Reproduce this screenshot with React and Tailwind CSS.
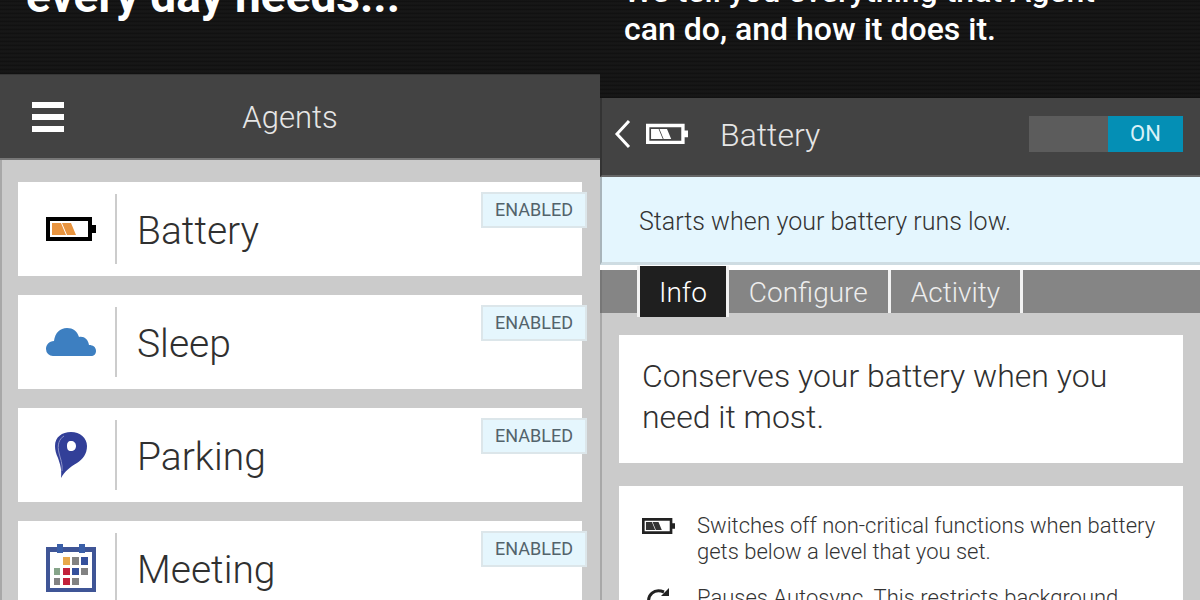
import { useState } from "react";

const agents = [
  { name: "Battery", icon: <BatteryIcon className="w-[50px] text-black" fill="#e8943f" /> },
  { name: "Sleep", icon: <CloudIcon /> },
  { name: "Parking", icon: <PinIcon /> },
  { name: "Meeting", icon: <CalendarIcon /> },
];

const tabs = ["Info", "Configure", "Activity"];

function BatteryIcon({ className, fill }) {
  return (
    <svg viewBox="0 0 50 26" className={className} aria-hidden="true">
      <path fill="currentColor" fillRule="evenodd" d="M0 1h46v8h4v8h-4v8H0zM4 5v16h38V5z" />
      <path fill={fill} d="M6 7h9l5 12H6zM16 7h9l5 12h-9z" />
    </svg>
  );
}

function CloudIcon() {
  return (
    <svg viewBox="0 0 50 28" className="w-[50px]" aria-hidden="true">
      <path
        fill="#3d7fc1"
        d="M7 28a7 7 0 0 1-7-7c0-4 3-8 8-8C9 5 14 0 21 0c6 0 10 3 12 9 5-1 9 2 10 8 4 0 7 2 7 6 0 3-2 5-5 5z"
      />
    </svg>
  );
}

function PinIcon() {
  return (
    <svg viewBox="0 0 34 48" className="w-[34px]" aria-hidden="true">
      <path
        fill="#323f98"
        fillRule="evenodd"
        d="M7 47C8 38 6 33 4 27 2 23 1 19 1 15 1 6 8 1 17 1s16 6 16 14c0 8-4 13-10 17-7 4-12 8-16 15zM17 10c-3 0-4 2-4 5s1 5 4 5 5-2 5-5-2-5-5-5z"
      />
      <path fill="none" stroke="#8d93c8" d="M8 40C9 33 6 27 5 22 3 14 5 8 10 5" />
    </svg>
  );
}

function CalendarIcon() {
  return (
    <svg viewBox="0 0 50 50" className="w-[50px]" aria-hidden="true">
      <path fill="#3f5596" fillRule="evenodd" d="M0 4h50v45H0zM4 9v36h42V9z" />
      <path fill="#3a5fa8" d="M11 1h6v9h-6zM33 1h6v9h-6z" />
      <path fill="#e8a84a" d="M17 14h7v8h-7z" />
      <path fill="#828282" d="M26 14h7v8h-7zM35 25h7v7h-7zM8 35h6v7H8zM26 35h7v7h-7z" />
      <path fill="#35509c" d="M35 14h7v8h-7zM26 25h7v7h-7z" />
      <path fill="#86a489" d="M8 25h6v7H8z" />
      <path fill="#c2223b" d="M17 25h7v7h-7zM17 35h7v7h-7z" />
    </svg>
  );
}

function SyncIcon() {
  return (
    <svg viewBox="0 0 28 28" className="w-7" aria-hidden="true">
      <g fill="none" stroke="#222" strokeWidth="3">
        <path d="M4 17C2 8 9 1 19 5M24 14c0 8-9 12-16 7" />
      </g>
      <path fill="#222" d="M24 1v8h-8zM4 27v-8h8z" />
    </svg>
  );
}

function AgentsPanel() {
  return (
    <section className="flex min-w-0 flex-col bg-[#cbcbcb]">
      <div className="flex h-[74px] shrink-0 flex-col justify-end overflow-hidden bg-[#151515] bg-[repeating-linear-gradient(0deg,#111_0px,#111_1px,#181818_2px,#151515_4px)] px-[26px] pb-[52px]">
        <h1 className="text-[46px] leading-[52px] font-bold text-white">every day needs...</h1>
      </div>
      <header className="flex h-[86px] shrink-0 items-center border-t border-b-2 border-t-[#363636] border-b-[#777] bg-[#434343] px-8">
        <button type="button" aria-label="Menu" className="flex w-8 flex-col gap-1.5">
          <span className="h-1.5 bg-white" />
          <span className="h-1.5 bg-white" />
          <span className="h-1.5 bg-white" />
        </button>
        <h2 className="flex-1 pt-0.5 pr-[52px] text-center text-[31px] leading-9 font-light text-[#e6e6e6]">Agents</h2>
      </header>
      <ul className="flex flex-col gap-[19px] border-l-2 border-[#a8a8a8] pt-[22px] pr-[18px] pl-4">
        {agents.map((agent) => (
          <li key={agent.name} className="relative flex h-[94px] shrink-0 items-center bg-white">
            <div className="flex h-[70px] w-[99px] shrink-0 items-center justify-center border-r-2 border-[#ccc] pl-2">
              {agent.icon}
            </div>
            <h3 className="pt-1 pl-5 text-[39px] leading-11 font-light text-[#303030]">{agent.name}</h3>
            <span className="absolute top-2.5 -right-[5px] border-2 border-[#dce6ea] bg-[#e5f6fd] px-3 text-[18px] leading-8 text-[#53636b]">
              ENABLED
            </span>
          </li>
        ))}
      </ul>
    </section>
  );
}

function BatteryPanel() {
  const [on, setOn] = useState(true);
  const [tab, setTab] = useState("Info");

  return (
    <section className="flex min-w-0 flex-col bg-[#cbcbcb]">
      <div className="flex h-[98px] shrink-0 flex-col justify-end overflow-hidden bg-[#151515] bg-[repeating-linear-gradient(0deg,#111_0px,#111_1px,#181818_2px,#151515_4px)] px-6 pb-[50px]">
        <p className="text-[32px] leading-[38px] font-medium whitespace-nowrap text-white">
          We tell you everything that Agent
          <br />
          can do, and how it does it.
        </p>
      </div>
      <header className="flex h-[79px] shrink-0 items-center border-b-2 border-l-2 border-b-[#666] border-l-[#333] bg-[#434343] pr-[17px] pb-1.5 pl-3">
        <button type="button" aria-label="Back" className="flex items-center">
          <svg viewBox="0 0 18 30" className="w-[18px]" aria-hidden="true">
            <path d="M15 2 3 15l12 13" fill="none" stroke="#fff" strokeWidth="3" />
          </svg>
        </button>
        <BatteryIcon className="ml-3.5 w-[42px] text-white" fill="#fff" />
        <h2 className="flex-1 pt-0.5 pl-8 text-[32px] leading-9 font-light text-[#e6e6e6]">Battery</h2>
        <button
          type="button"
          role="switch"
          aria-checked={on}
          aria-label="Battery agent"
          onClick={() => setOn(!on)}
          className={`flex h-9 w-[154px] bg-[#5c5c5c] ${on ? "justify-end" : "justify-start"}`}
        >
          <span className="w-[75px] bg-[#048fb5] text-center text-[22px] leading-9 text-[#d9f1f8]">
            {on ? "ON" : "OFF"}
          </span>
        </button>
      </header>
      <p className="flex h-[88px] shrink-0 items-center border-b-3 border-l-2 border-b-[#cedce2] border-l-[#a8b4ba] bg-[#e4f6fe] pt-1 pl-[37px] text-[25px] leading-8 font-light text-[#333]">
        Starts when your battery runs low.
      </p>
      <div className="h-[5px] shrink-0 bg-white" />
      <div role="tablist" className="flex h-[43px] shrink-0 border-l-2 border-[#777] bg-[#858585] pl-[35px]">
        {tabs.map((name) => (
          <button
            key={name}
            type="button"
            role="tab"
            aria-selected={tab === name}
            onClick={() => setTab(name)}
            className={
              tab === name
                ? "-my-1 border-x-3 border-[#f2f2f2] bg-[#1f1f1f] bg-clip-padding px-[19px] pt-0.5 text-[28px] leading-9 font-light text-white"
                : "border-r-3 border-[#f2f2f2] px-5 pt-0.5 text-[28px] leading-9 font-light text-[#ededed]"
            }
          >
            {name}
          </button>
        ))}
      </div>
      <div className="flex flex-col gap-[23px] border-l-2 border-[#a8a8a8] px-[17px] pt-[22px]">
        <div className="shrink-0 bg-white px-[23px] pt-[21px] pb-[25px]">
          <p className="max-w-[480px] text-[32px] leading-[41px] font-light text-[#303030]">
            Conserves your battery when you need it most.
          </p>
        </div>
        <ul className="flex shrink-0 flex-col gap-5 bg-white px-[23px] py-[27px]">
          <li className="flex gap-[22px]">
            <BatteryIcon className="mt-1 h-[18px] w-[33px] shrink-0 text-[#222]" fill="#333" />
            <p className="text-[22px] leading-[26px] font-light text-[#333]">
              Switches off non-critical functions when battery gets below a level that you set.
            </p>
          </li>
          <li className="flex gap-[22px]">
            <span className="flex w-[33px] shrink-0 items-start justify-center pt-0.5">
              <SyncIcon />
            </span>
            <p className="text-[22px] leading-[26px] font-light text-[#333]">
              Pauses Autosync. This restricts background
            </p>
          </li>
        </ul>
      </div>
    </section>
  );
}

export default function App() {
  return (
    <main className="grid h-screen grid-cols-2 overflow-hidden font-[Roboto,sans-serif]">
      <AgentsPanel />
      <BatteryPanel />
    </main>
  );
}
